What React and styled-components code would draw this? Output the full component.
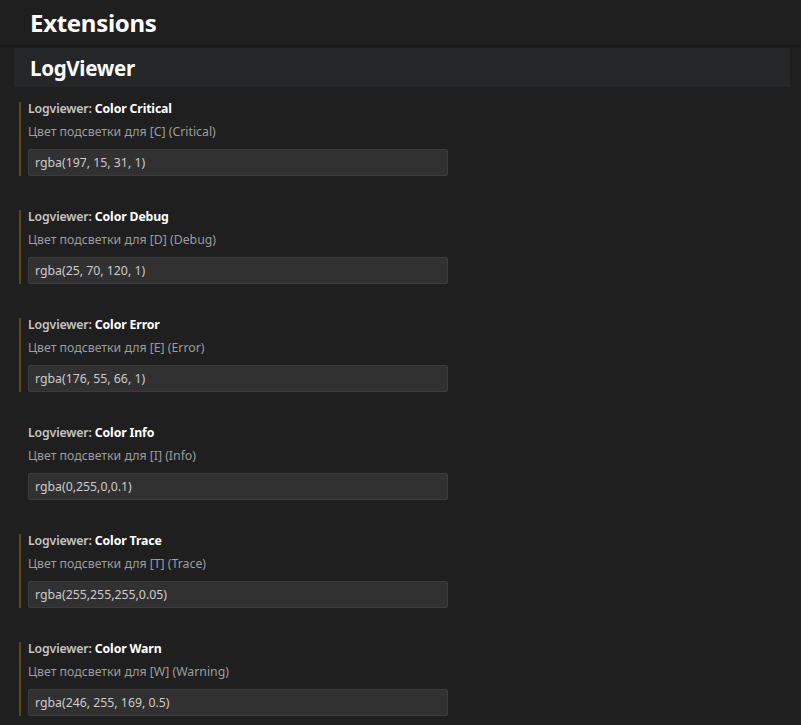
import React from "react";
import styled, { createGlobalStyle } from "styled-components";

const Global = createGlobalStyle`
  html, body { margin: 0; padding: 0; background: #1f1f1f; }
  body { font-family: "Noto Sans", "Open Sans", sans-serif; overflow: hidden; }
`;

const Page = styled.div`
  width: 801px;
  height: 725px;
  background: #1f1f1f;
  display: flex;
  flex-direction: column;
`;

const Header = styled.div`
  height: 45px;
  flex: none;
  display: flex;
  align-items: center;
  padding-left: 30px;
  font-size: 24px;
  font-weight: 700;
  color: #ffffff;
  background: #1f1f1f;
  box-shadow: 0 1px 2px rgba(0, 0, 0, 0.6);
  position: relative;
  z-index: 1;
  letter-spacing: -0.3px;
`;

const Body = styled.div`
  padding: 3px 11px 0 14px;
  display: flex;
  flex-direction: column;
`;

const GroupTitle = styled.div`
  height: 39px;
  display: flex;
  align-items: center;
  padding-left: 16px;
  background: #252628;
  color: #ffffff;
  font-size: 20.5px;
  font-weight: 700;
  letter-spacing: -0.3px;
`;

const List = styled.div`
  display: flex;
  flex-direction: column;
  gap: 34px;
  padding: 15px 0 0 5px;
`;

const Item = styled.div`
  display: flex;
  flex-direction: column;
  width: 420px;
  padding-left: 7px;
  border-left: 2px solid ${(p) => (p.$modified ? "#5d4716" : "transparent")};
`;

const Title = styled.div`
  line-height: 14px;
  font-size: 12.3px;
  font-weight: 600;
  color: #c4c4c4;
  white-space: nowrap;
  letter-spacing: -0.15px;
`;

const Name = styled.span`
  color: #ffffff;
  font-weight: 700;
`;

const Desc = styled.div`
  margin-top: 7px;
  line-height: 18px;
  font-size: 12.3px;
  color: #9d9d9d;
  white-space: nowrap;
`;

const Input = styled.div`
  margin-top: 8px;
  height: 25px;
  box-sizing: content-box;
  display: flex;
  align-items: center;
  padding: 0 6px;
  background: #313131;
  border: 1px solid #3c3c3c;
  border-radius: 2px;
  color: #cccccc;
  font-size: 12.3px;
`;

const items = [
  { name: "Color Critical", desc: "Цвет подсветки для [C] (Critical)", value: "rgba(197, 15, 31, 1)", modified: true },
  { name: "Color Debug", desc: "Цвет подсветки для [D] (Debug)", value: "rgba(25, 70, 120, 1)", modified: true },
  { name: "Color Error", desc: "Цвет подсветки для [E] (Error)", value: "rgba(176, 55, 66, 1)", modified: true },
  { name: "Color Info", desc: "Цвет подсветки для [I] (Info)", value: "rgba(0,255,0,0.1)", modified: false },
  { name: "Color Trace", desc: "Цвет подсветки для [T] (Trace)", value: "rgba(255,255,255,0.05)", modified: true },
  { name: "Color Warn", desc: "Цвет подсветки для [W] (Warning)", value: "rgba(246, 255, 169, 0.5)", modified: true },
];

export default function App() {
  return (
    <Page>
      <Global />
      <Header>Extensions</Header>
      <Body>
        <GroupTitle>LogViewer</GroupTitle>
        <List>
          {items.map((it) => (
            <Item key={it.name} $modified={it.modified}>
              <Title>
                Logviewer: <Name>{it.name}</Name>
              </Title>
              <Desc>{it.desc}</Desc>
              <Input>{it.value}</Input>
            </Item>
          ))}
        </List>
      </Body>
    </Page>
  );
}
